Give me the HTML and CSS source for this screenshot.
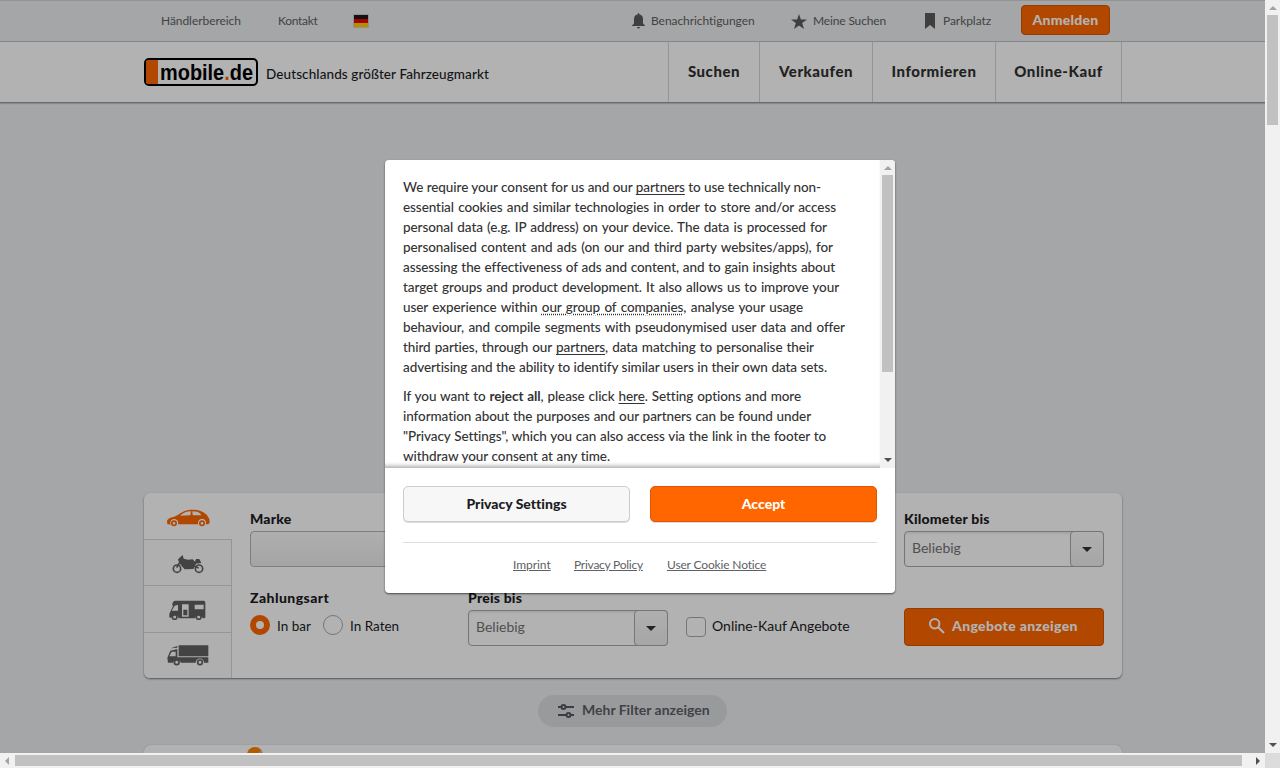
FILE: index.html
```html
<!DOCTYPE html>
<html lang="de">
<head>
<meta charset="utf-8">
<title>mobile.de</title>
<link rel="stylesheet" href="styles.css">
</head>
<body>
<div class="window">
  <div class="view">
    <div class="topbar">
      <div class="wrap top-items">
        <span class="t-dealer">Händlerbereich</span>
        <span class="t-contact">Kontakt</span>
        <span class="flag"><i class="black"></i><i class="red"></i><i class="gold"></i></span>
        <span class="t-item bell"><svg width="13" height="16" viewBox="0 0 13 16"><path d="M6.500 0Q7.500 0 7.500 1.500Q11 2.300 11 6V10.500L13 12.500V13H0V12.500L2 10.500V6Q2 2.300 5.500 1.500Q5.500 0 6.500 0ZM5 14H8Q8 15.600 6.500 15.600T5 14Z"/></svg><b>Benachrichtigungen</b></span>
        <span class="t-item star"><svg width="16" height="15" viewBox="0 0 16 15"><path d="M8 0L9.900 5.400H16L11.200 9L13 15L8 11.400L3 15L4.800 9L0 5.400H6.100Z"/></svg><b>Meine Suchen</b></span>
        <span class="t-item park"><svg width="10" height="16" viewBox="0 0 10 16"><path d="M0 0H10V16L5 12L0 16Z"/></svg><b>Parkplatz</b></span>
        <a class="login">Anmelden</a>
      </div>
    </div>
    <div class="header">
      <div class="wrap head-items">
        <svg class="logo" width="114" height="28" viewBox="0 0 114 28"><rect x="1" y="1" width="112" height="26" rx="4" fill="#fff" stroke="#000" stroke-width="2"/><path d="M4 2H14V26H4Q2 26 2 24V4Q2 2 4 2Z" fill="#f60"/><text class="logo-text" x="16" y="21.500" textLength="93" lengthAdjust="spacingAndGlyphs">mobile<tspan fill="#f60">.</tspan>de</text></svg>
        <span class="claim">Deutschlands größter Fahrzeugmarkt</span>
        <nav class="nav"><a class="n1">Suchen</a><a class="n2">Verkaufen</a><a class="n3">Informieren</a><a class="n4">Online-Kauf</a></nav>
      </div>
    </div>
    <div class="wrap main">
      <div class="search">
        <div class="tabs">
          <div class="tab active"><svg width="43" height="18" viewBox="80 71 129 54"><path fill-rule="evenodd" d="M81 116L80 106Q83 97 101 94L111 90Q132 74 150 73H164Q184 74 199 88L207 101L208 112L204 117H196A12 12 0 1 0 174 117H113A12 12 0 1 0 91 118ZM119 91L150 90L152 78Q135 77 119 91ZM156 78L157 90H183Q181 83 171 79Z"/><circle class="wheel" cx="101" cy="114" r="6.500"/><circle class="wheel" cx="185" cy="114" r="6.500"/></svg></div>
          <div class="tab"><svg width="32" height="20" viewBox="94 206 96 60"><path d="M112 222L126 209L129 220L142 223L156 222L163 229L166 221H176L182 233L166 235L158 251L132 252L123 242L115 231Z"/><path class="line" d="M119 228L108 247M155 240L174 248"/><circle class="wheel" cx="109" cy="250" r="11"/><circle class="wheel" cx="175" cy="250" r="11"/></svg></div>
          <div class="tab t3"><svg width="37" height="20" viewBox="86 346 111 60"><path fill-rule="evenodd" d="M105 348H190Q195 348 195 354V397Q195 401 190 401H187A12 12 0 0 0 164 401H115A12 12 0 0 0 92 400L87 398V387L98 364Q94 361 97 354Q99 348 105 348ZM103 363L94 378H113V360ZM125 359V396H145V359ZM163 360V374H190V360ZM129 375H141V392H129Z"/><circle class="wheel" cx="103" cy="397" r="7"/><circle class="wheel" cx="175" cy="397" r="7"/></svg></div>
          <div class="tab t4"><svg width="42" height="21" viewBox="77 482 126 63"><path fill-rule="evenodd" d="M112 483H201V516H112ZM108 494V519H201V535H188A12 12 0 0 0 163 535H118A12 12 0 0 0 95 535H80L78 520L87 499ZM91 502L84 516H103V502ZM89 492L108 485V490Z"/><circle class="wheel" cx="106" cy="534" r="7"/><circle class="wheel" cx="176" cy="534" r="7"/></svg></div>
        </div>
        <div class="fields">
          <div class="field"><label>Marke</label><div class="plain"></div></div>
          <div class="field"></div>
          <div class="field"></div>
          <div class="field"><label>Kilometer bis</label><div class="select"><span>Beliebig</span><i class="drop"></i></div></div>
          <div class="field"><label class="pay">Zahlungsart</label><div class="radios"><i class="radio on"></i><span class="r1">In bar</span><i class="radio"></i><span>In Raten</span></div></div>
          <div class="field"><label>Preis bis</label><div class="select"><span>Beliebig</span><i class="drop"></i></div></div>
          <div class="field check"><i class="box"></i><span>Online-Kauf Angebote</span></div>
          <div class="field act"><a class="submit"><svg width="16" height="16" viewBox="0 0 16 16"><circle cx="5.700" cy="5.700" r="4.700"/><path d="M9.200 9.200L15 15"/></svg>Angebote anzeigen</a></div>
        </div>
      </div>
      <div class="more"><svg width="16" height="14" viewBox="0 0 16 14"><path d="M0 3H3M8 3H16M0 11H8M13 11H16"/><circle cx="5.500" cy="3" r="2"/><circle cx="10.500" cy="11" r="2"/></svg><span>Mehr Filter anzeigen</span></div>
      <div class="next"><i class="dot"></i></div>
    </div>
    <div class="shade"></div>
    <div class="modal">
      <div class="scroll">
        <div class="copy">
          <p>
            <span class="ln" style="width:418px">We require your consent for us and our <u>partners</u> to use technically non-</span>
            <span class="ln" style="width:433px">essential cookies and similar technologies in order to store and/or access</span>
            <span class="ln" style="width:424px">personal data (e.g. IP address) on your device. The data is processed for</span>
            <span class="ln" style="width:430px">personalised content and ads (on our and third party websites/apps), for</span>
            <span class="ln" style="width:432px">assessing the effectiveness of ads and content, and to gain insights about</span>
            <span class="ln" style="width:436px">target groups and product development. It also allows us to improve your</span>
            <span class="ln" style="width:400px">user experience within <u class="dotted">our group of companies</u>, analyse your usage</span>
            <span class="ln" style="width:442px">behaviour, and compile segments with pseudonymised user data and offer</span>
            <span class="ln" style="width:411px">third parties, through our <u>partners</u>, data matching to personalise their</span>
            <span class="ln" style="width:424px">advertising and the ability to identify similar users in their own data sets.</span>
          </p>
          <p>
            <span class="ln" style="width:398px">If you want to <b>reject all</b>, please click <u>here</u>. Setting options and more</span>
            <span class="ln" style="width:408px">information about the purposes and our partners can be found under</span>
            <span class="ln" style="width:423px">"Privacy Settings", which you can also access via the link in the footer to</span>
            <span class="ln" style="width:207px">withdraw your consent at any time.</span>
          </p>
        </div>
        <div class="bar inner"><i class="arr up"></i><i class="thumb"></i><i class="arr down"></i></div>
      </div>
      <div class="foot">
        <div class="btns"><a class="btn">Privacy Settings</a><a class="btn primary">Accept</a></div>
        <div class="links"><a class="l1">Imprint</a><a class="l2">Privacy Policy</a><a class="l3">User Cookie Notice</a></div>
      </div>
    </div>
  </div>
  <div class="bar outer"><i class="arr up"></i><i class="thumb"></i><i class="arr down"></i></div>
  <div class="hbar"><i class="arr left"></i><i class="hthumb"></i><i class="arr right"></i></div>
  <div class="corner"></div>
</div>
</body>
</html>
```
FILE: styles.css
```css
* { box-sizing: border-box; }
body { margin: 0; overflow: hidden; font: 14px/20px Lato, "Noto Sans", sans-serif; color: #1c1c1f; font-variant-ligatures: none; }
i { display: block; font-style: normal; }
svg { display: block; flex: none; }
.window { display: grid; grid-template: 753px 15px / 1265px 15px; width: 1280px; height: 768px; }
.view { position: relative; overflow: hidden; background: #edeef0; }
.wrap { width: 978px; margin-left: 144px; white-space: nowrap; }
.topbar { height: 42px; border-top: 1px solid #d2d3d5; border-bottom: 1px solid #bfc0c3; }
.top-items { display: flex; align-items: center; height: 40px; padding-left: 17px; font-size: 12px; color: #606060; letter-spacing: -.06px; }
.t-dealer { width: 117px; }
.t-contact { width: 75px; letter-spacing: -.3px; }
.flag { width: 16px; height: 14px; border: 1px solid #cfd0d2; margin-right: 263px; }
.flag i { height: 4px; }
.black { background: #1b1b1b; }
.red { background: #f00000; }
.gold { background: #ffce00; }
.t-item { display: flex; align-items: center; }
.t-item svg { fill: #5b5b5b; }
.t-item b { font-weight: 400; }
.bell { gap: 6px; width: 159px; }
.star { gap: 6px; width: 134px; letter-spacing: -.15px; }
.park { gap: 8px; width: 96px; }
.login { width: 89px; height: 30px; margin-top: -2px; background: #f60; border: 1px solid #d95700; border-radius: 4px; text-align: center; color: #fff; font-size: 14px; font-weight: 900; line-height: 27px; letter-spacing: .25px; }
.header { height: 61px; background: #fff; border-bottom: 1px solid #98999b; box-shadow: 0 1px 1px #c6c7c9; }
.head-items { display: flex; height: 60px; }
.logo { margin-top: 16px; }
.logo-text { font: bold 22px "Liberation Sans", Arial, sans-serif; }
.claim { margin: 22px 0 0 8px; width: 402px; font-size: 13.5px; font-weight: 500; letter-spacing: .1px; }
.nav { display: flex; height: 60px; }
.nav a { border-left: 1px solid #d6d6d6; text-align: center; font-size: 15px; font-weight: 900; line-height: 59px; letter-spacing: .55px; color: #303030; }
.n1 { width: 91px; }
.n2 { width: 113px; }
.n3 { width: 123px; }
.nav .n4 { width: 127px; border-right: 1px solid #d6d6d6; }
.main { padding-top: 390px; }
.search { display: flex; height: 185px; background: #fff; border-radius: 6px; box-shadow: 0 1px 2px #77787a; }
.tabs { width: 88px; display: grid; grid-template-rows: 46px 46px 47px 46px; }
.tab { display: grid; place-items: center; padding-top: 2px; background: #fbfbfb; border-top: 1px solid #d6d6d6; border-right: 1px solid #d6d6d6; fill: #606060; stroke: #606060; }
.tab path { stroke: none; }
.tab.active { background: none; border-color: transparent; fill: #f60; stroke: #f60; padding-left: 1px; }
.t4 { padding-top: 0; border-bottom-left-radius: 6px; }
.tab .line, .wheel { fill: none; stroke-width: 5; }
.tab .line { stroke: #606060; }
.fields { display: grid; grid-template: 79px 79px / repeat(4, 200px); column-gap: 18px; padding: 17px 18px 0; }
label { display: block; height: 21px; font-size: 14px; line-height: 17px; font-weight: 900; letter-spacing: .2px; }
.pay { letter-spacing: .45px; }
.plain { height: 36px; border: 1px solid #b5b5b5; border-radius: 4px; background: linear-gradient(#fafafa, #ececec); }
.select { display: flex; justify-content: space-between; height: 36px; border: 1px solid #aaa; border-radius: 4px; padding-left: 7px; box-shadow: inset 0 2px 2px #eee; color: #737373; line-height: 32px; }
.drop { width: 34px; margin: -1px; border: 1px solid #aaa; border-radius: 4px; background: linear-gradient(#fbfbfb, #eee); display: grid; place-items: center; }
.drop::after { content: ""; border: 5px solid transparent; border-top-color: #333; border-bottom: 0; }
.radios { display: flex; align-items: center; height: 32px; font-size: 13.5px; }
.radio { width: 20px; height: 20px; margin-top: -3px; margin-right: 7px; border: 1px solid #aaa; border-radius: 50%; }
.radio.on { border: 6px solid #f60; }
.r1 { width: 46px; }
.check { display: flex; gap: 6px; padding-top: 28px; font-size: 14px; line-height: 18px; }
.box { width: 20px; height: 20px; border: 1px solid #aaa; border-radius: 4px; }
.act { padding-top: 19px; }
.submit { display: flex; align-items: center; gap: 7px; height: 38px; padding-left: 24px; padding-bottom: 2px; border: 1px solid #d95700; border-radius: 4px; background: #f60; color: #fff; font-size: 14px; font-weight: 900; letter-spacing: .35px; }
.submit svg { fill: none; stroke: #fff; stroke-width: 2; }
.more { display: flex; align-items: center; gap: 8px; width: 189px; height: 32px; margin: 17px 0 18px 394px; padding-left: 20px; border-radius: 16px; background: #dcdddf; font-size: 14px; font-weight: 700; color: #5c5f66; }
.more span { margin-top: -2px; }
.more svg { fill: none; stroke: #555860; stroke-width: 2; }
.next { height: 40px; padding: 2px 0 0 103px; background: #fff; border-radius: 6px; box-shadow: 0 0 1px #999; }
.dot { width: 16px; height: 16px; border-radius: 50%; background: linear-gradient(120deg, #ff8100 60%, #e2a68b 60%); }
.shade { position: absolute; inset: 0; background: rgba(0, 0, 0, .3); }
.modal { position: absolute; left: 385px; top: 160px; width: 510px; height: 433px; background: #fff; border-radius: 4px; box-shadow: 0 1px 2px rgba(0, 0, 0, .6); overflow: hidden; color: #333; }
.scroll { display: flex; height: 308px; }
.copy { width: 495px; padding: 17px 18px 0; overflow: hidden; box-shadow: inset 0 -5px 4px -3px #aaa; font-size: 13.5px; font-weight: 500; letter-spacing: -.08px; }
p { margin: 0 0 9px; }
.ln { display: block; white-space: nowrap; text-align-last: justify; }
.dotted { text-decoration-style: dotted; }
u { text-underline-offset: 2px; }
.bar { display: flex; flex-direction: column; align-items: center; width: 15px; background: #f1f1f1; }
.inner { height: 308px; }
.thumb { width: 11px; background: #c1c1c1; }
.inner .thumb { height: 197px; margin-bottom: 86px; }
.outer .thumb { height: 110px; margin-bottom: 618px; }
.arr { border: 4px solid transparent; }
.up { border-bottom-color: #a3a3a3; border-top: 0; margin: 6px 0 5px; }
.down { border-top-color: #505050; border-bottom: 0; }
.foot { padding: 18px; }
.btns { display: flex; gap: 20px; padding-bottom: 20px; border-bottom: 1px solid #ddd; }
.btn { width: 227px; height: 36px; border: 1px solid #ccc; border-radius: 5px; background: #f7f7f7; box-shadow: 0 1px 0 #ddd; text-align: center; line-height: 33px; font-size: 14px; font-weight: 900; color: #1c1c1f; }
.btn.primary { background: #f60; border-color: #e05500; color: #fff; }
.links { display: flex; padding: 12px 0 0 110px; font-size: 12px; color: #606166; text-decoration: underline; white-space: nowrap; letter-spacing: -.15px; }
.l1 { width: 61px; letter-spacing: -.05px; }
.l2 { width: 93px; letter-spacing: -.25px; }
.hbar { display: flex; align-items: center; background: #f1f1f1; }
.left { margin: 0 6px 0 5px; border-left: 0; border-right-color: #a3a3a3; }
.right { margin-left: 14px; border-right: 0; border-left-color: #505050; }
.hthumb { width: 1227px; height: 11px; background: #c1c1c1; }
.corner { background: #dcdcdc; }
```
